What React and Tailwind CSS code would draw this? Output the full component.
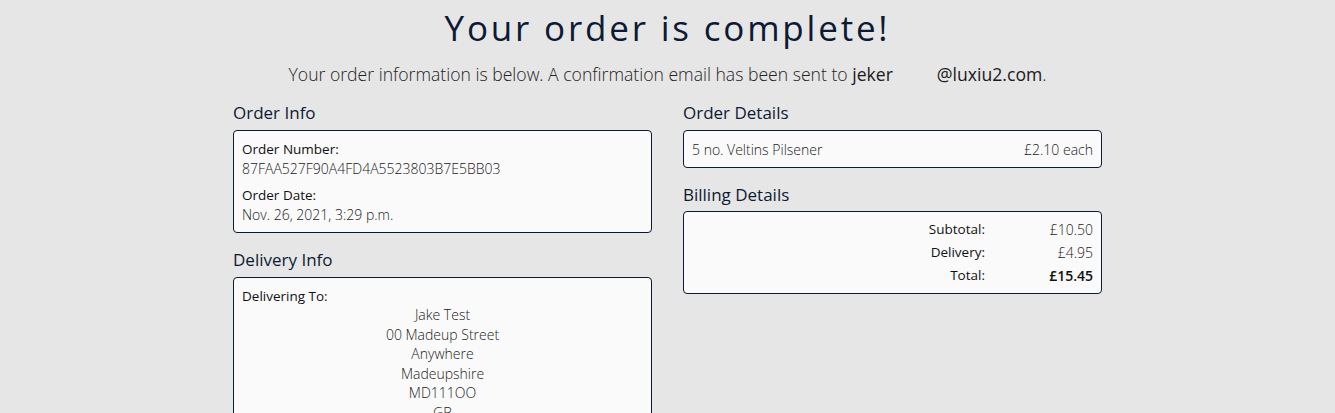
const rows = [
  { label: "Subtotal:", value: "£10.50" },
  { label: "Delivery:", value: "£4.95" },
  { label: "Total:", value: "£15.45", bold: true },
];

const address = ["Jake Test", "00 Madeup Street", "Anywhere", "Madeupshire", "MD111OO", "GB"];

function Box({ className = "", children }) {
  return (
    <div className={"rounded-[4px] border border-[#0d1a33] bg-[#fafafa] " + className}>
      {children}
    </div>
  );
}

function Heading({ className = "mb-[6px]", children }) {
  return (
    <h2 className={"text-[17px] leading-[22px] font-medium text-[#0d1a33] " + className}>{children}</h2>
  );
}

export default function App() {
  return (
    <div className="h-screen overflow-hidden bg-[#e6e6e6] font-['Open_Sans',sans-serif] text-[#333]">
      <h1 className="pt-[6px] text-center text-[35px] leading-[44px] tracking-[2.8px] text-[#0d1a33]">
        Your order is complete!
      </h1>
      <p className="mt-[13px] text-center text-[17.6px] leading-[22px] font-light text-[#222]">
        Your order information is below. A confirmation email has been sent to{" "}
        <span className="font-medium text-[#1a1a1a]">jeker</span>
        <span className="inline-block w-[44px]" />
        <span className="font-medium text-[#1a1a1a]">@luxiu2.com</span>.
      </p>

      <div className="mx-auto mt-[17px] grid w-[869px] grid-cols-2 gap-x-[31px]">
        <div>
          <Heading>Order Info</Heading>
          <Box className="px-[8px] pt-[9px] pb-[8px] text-[14px] leading-[19px]">
            <div className="text-[13.5px] font-medium text-[#111]">Order Number:</div>
            <div className="font-light text-[#222]">87FAA527F90A4FD4A5523803B7E5BB03</div>
            <div className="mt-[8px] text-[13.5px] font-medium text-[#111]">Order Date:</div>
            <div className="font-light text-[#222]">Nov. 26, 2021, 3:29 p.m.</div>
          </Box>

          <div className="mt-[16px]">
            <Heading>Delivery Info</Heading>
            <Box className="px-[8px] pt-[10px] pb-[10px] text-[14px] leading-[19.5px]">
              <div className="text-[13.5px] leading-[17px] font-medium text-[#111]">Delivering To:</div>
              <div className="text-center font-light text-[#222]">
                {address.map((line) => (
                  <div key={line}>{line}</div>
                ))}
              </div>
            </Box>
          </div>
        </div>

        <div>
          <Heading>Order Details</Heading>
          <Box className="flex h-[38px] items-center justify-between px-[8px] text-[14px] leading-[19px] font-light text-[#222]">
            <span>5 no. Veltins Pilsener</span>
            <span>£2.10 each</span>
          </Box>

          <div className="mt-[16px]">
            <Heading className="mb-[5px]">Billing Details</Heading>
            <Box className="flex h-[83px] flex-col justify-center px-[8px] text-[13.5px]">
              {rows.map((r) => (
                <div key={r.label} className="flex h-[23px] items-center justify-end">
                  <span className="font-medium text-[#111]">{r.label}</span>
                  <span
                    className={
                      "w-[108px] text-right text-[14px] " +
                      (r.bold ? "font-semibold text-[#111]" : "font-light text-[#222]")
                    }
                  >
                    {r.value}
                  </span>
                </div>
              ))}
            </Box>
          </div>
        </div>
      </div>
    </div>
  );
}
